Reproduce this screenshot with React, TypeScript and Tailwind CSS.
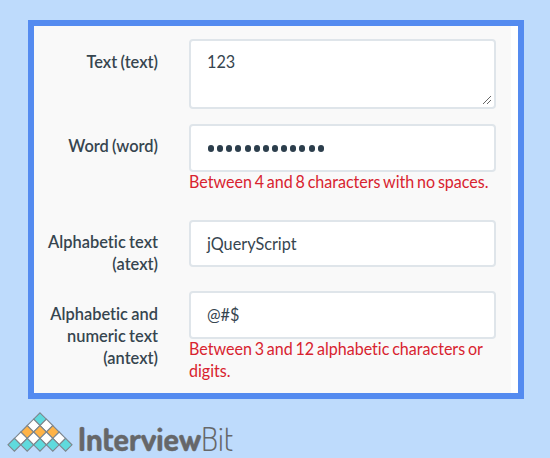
import type { ReactNode } from "react";

function Row({
  label,
  className,
  labelClass,
  children,
}: {
  label: ReactNode;
  className: string;
  labelClass: string;
  children: ReactNode;
}) {
  return (
    <div className={`flex ${className}`}>
      <label
        className={`w-[124px] shrink-0 origin-right scale-x-[0.965] whitespace-nowrap text-right font-semibold [word-spacing:-0.8px] ${labelClass}`}
      >
        {label}
      </label>
      <div className="ml-[30.5px] w-[307px]">{children}</div>
    </div>
  );
}

const box =
  "flex w-full rounded-[4px] border-2 border-[#dfe5ea] bg-white pl-[16px]";

function ErrorText({ children }: { children: ReactNode }) {
  return (
    <p className="-mt-px w-[320px] origin-left scale-x-[0.945] whitespace-nowrap text-[#d8232f] [word-spacing:-1.4px]">
      {children}
    </p>
  );
}

const logoRows = ["#5fdadd", "#ffffff", "#ffb347", "#ffffff", "#5fdadd"];

function Logo() {
  return (
    <svg width="240" height="50" viewBox="0 408 240 50" role="img" aria-label="InterviewBit">
      {logoRows.map((fill, r) =>
        Array.from({ length: r + 1 }, (_, c) => {
          const x = 40 + (c * 2 - r) * 6.4;
          const y = 419.2 + r * 6.4;
          return (
            <path
              key={`${r}-${c}`}
              d={`M${x} ${y - 6.4}l6.4 6.4l-6.4 6.4l-6.4-6.4z`}
              fill={fill}
              stroke="#7d858c"
              strokeWidth="1.1"
            />
          );
        }),
      )}
      <g fill="#666769" fontFamily="Dosis, Inter, sans-serif">
        <text
          x="78"
          y="450.5"
          fontSize="32"
          fontWeight="700"
          stroke="#666769"
          strokeWidth="0.4"
          strokeLinejoin="round"
          textLength="123"
          lengthAdjust="spacingAndGlyphs"
        >
          Interview
        </text>
        <text x="201" y="450.5" fontSize="32.5" fontWeight="300" textLength="32" lengthAdjust="spacingAndGlyphs">
          Bit
        </text>
      </g>
    </svg>
  );
}

export default function App() {
  return (
    <div className="flex h-[458px] w-[550px] flex-col overflow-hidden bg-[#bedbfc] pl-[28px] pt-[20px] font-['Lato',sans-serif] text-[17px] leading-[22px] text-[#36454f] [font-variant-ligatures:none]">
      <main className="h-[379px] w-[496px] shrink-0 border-[6.5px] border-[#548bf0] bg-white">
        <div className="h-full w-[477px] bg-[#f9f9f9] pt-[13px]">
          <Row label="Text (text)" className="h-[85px]" labelClass="mt-[12px]">
            <div className={`${box} relative h-[70px] pt-[10px]`}>
              <span className="origin-left scale-x-[0.955]">123</span>
              <svg className="absolute bottom-[2px] right-[2px]" width="10" height="10" viewBox="0 0 10 10">
                <path d="M1 9L9 1M5 9l4-4" stroke="#666" strokeWidth="1" />
              </svg>
            </div>
          </Row>
          <Row label="Word (word)" className="h-[96px]" labelClass="mt-[11px]">
            <div className={`${box} h-[48px] items-center gap-[3.15px]`}>
              {Array.from({ length: 13 }, (_, i) => (
                <i key={i} className="relative left-[1.5px] h-[7px] w-[6px] shrink-0 rounded-full bg-[#2c3e4c]" />
              ))}
            </div>
            <ErrorText>Between 4 and 8 characters with no spaces.</ErrorText>
          </Row>
          <Row label={<>Alphabetic text<br />(atext)</>} className="h-[71px]" labelClass="mt-[11px]">
            <div className={`${box} h-[47px] items-center`}>
              <span className="origin-left scale-x-[0.955]">jQueryScript</span>
            </div>
          </Row>
          <Row label={<>Alphabetic and<br />numeric text<br />(antext)</>} className="h-[95px]" labelClass="mt-[12px]">
            <div className={`${box} h-[48px] items-center`}>
              <span className="origin-left scale-x-[0.955]">@#$</span>
            </div>
            <ErrorText>Between 3 and 12 alphabetic characters or<br />digits.</ErrorText>
          </Row>
        </div>
      </main>
      <footer className="-ml-[28px] mt-[9px]">
        <Logo />
      </footer>
    </div>
  );
}
